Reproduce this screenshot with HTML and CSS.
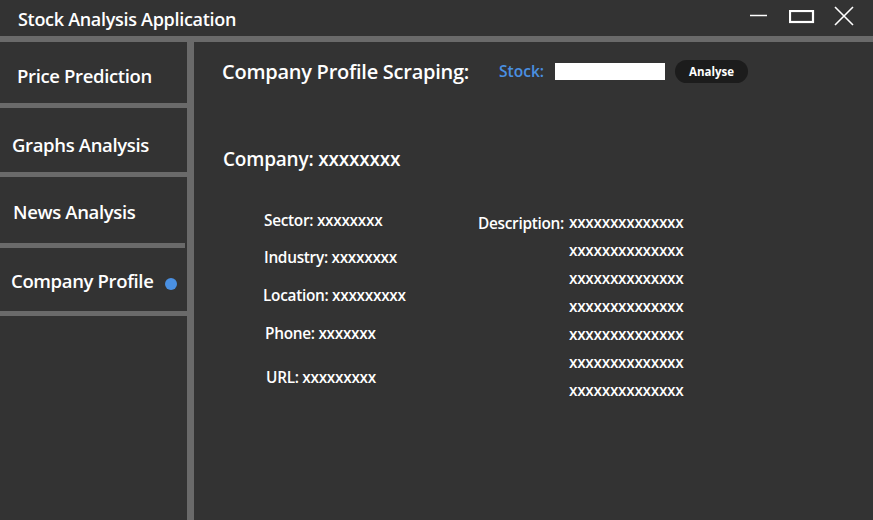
FILE: index.html
```html
<!DOCTYPE html>
<html>
<head>
<meta charset="utf-8">
<link rel="stylesheet" href="styles.css">
</head>
<body>
<div class="app">
  <header class="titlebar">
    <div class="title">Stock Analysis Application</div>
    <div class="controls">
      <svg class="ctl" width="18" height="20" viewBox="0 0 18 20"><line x1="0" y1="15.5" x2="17" y2="15.5" stroke="#fff" stroke-width="1.5"/></svg>
      <svg class="ctl" width="26" height="16" viewBox="0 0 26 16"><rect x="1" y="1" width="23" height="11" fill="none" stroke="#fff" stroke-width="2.2"/></svg>
      <svg class="ctl" width="20" height="20" viewBox="0 0 20 20"><path d="M1 1 L19 19 M19 1 L1 19" stroke="#fff" stroke-width="1.6"/></svg>
    </div>
  </header>
  <div class="main">
    <nav class="sidebar">
      <div class="item item1">Price Prediction</div>
      <div class="item item2">Graphs Analysis</div>
      <div class="item item3">News Analysis</div>
      <div class="item item4">Company Profile <span class="dot"></span></div>
    </nav>
    <section class="content">
      <div class="toolbar">
        <h1 class="heading">Company Profile Scraping:</h1>
        <span class="stock-label">Stock:</span>
        <div class="stock-input"></div>
        <button class="analyse">Analyse</button>
      </div>
      <div class="company">Company: xxxxxxxx</div>
      <div class="details">
        <div class="left">
          <div class="f f1">Sector: xxxxxxxx</div>
          <div class="f f2">Industry: xxxxxxxx</div>
          <div class="f f3">Location: xxxxxxxxx</div>
          <div class="f f4">Phone: xxxxxxx</div>
          <div class="f f5">URL: xxxxxxxxx</div>
        </div>
        <div class="desc">
          <div class="desc-label">Description:</div>
          <div class="desc-lines">
            <div>xxxxxxxxxxxxxx</div>
            <div>xxxxxxxxxxxxxx</div>
            <div>xxxxxxxxxxxxxx</div>
            <div>xxxxxxxxxxxxxx</div>
            <div>xxxxxxxxxxxxxx</div>
            <div>xxxxxxxxxxxxxx</div>
            <div>xxxxxxxxxxxxxx</div>
          </div>
        </div>
      </div>
    </section>
  </div>
</div>
</body>
</html>
```
FILE: styles.css
```css
* { box-sizing: border-box; margin: 0; padding: 0; }
html, body { width: 873px; height: 520px; overflow: hidden; }
body {
  background: #333333;
  color: #ffffff;
  font-family: "Open Sans", "Noto Sans", sans-serif;
}
.app { display: flex; flex-direction: column; height: 520px; }
.titlebar {
  display: flex;
  align-items: center;
  justify-content: space-between;
  padding-left: 18px;
  border-bottom: 6px solid #6a6a6a;
  height: 42px;
}
.title { font-size: 18px; font-weight: 600; letter-spacing: -0.3px; padding-top: 2px; }
.controls { display: flex; align-items: flex-start; align-self: stretch; }
.ctl { display: block; }
.controls .ctl:nth-child(1) { margin-top: 0; margin-right: 21px; }
.controls .ctl:nth-child(2) { margin-top: 10px; margin-right: 19px; }
.controls .ctl:nth-child(3) { margin-top: 6px; margin-right: 19px; }

.main { flex: 1; display: flex; }
.sidebar {
  width: 194px;
  border-right: 7px solid #6a6a6a;
  display: flex;
  flex-direction: column;
}
.item {
  border-bottom: 5px solid #6a6a6a;
  display: flex;
  align-items: center;
  font-size: 18.5px;
  font-weight: 600;
  letter-spacing: -0.35px;
}
.item1 { height: 66px; padding-left: 17px; padding-top: 5px; }
.item2 { height: 69px; padding-left: 12px; padding-top: 9px; }
.item3 { height: 71px; padding-left: 13px; padding-top: 3px; margin-right: 2px; }
.item4 { height: 68px; padding-left: 11px; padding-top: 1px; }
.dot {
  width: 12px; height: 12px; border-radius: 50%;
  background: #4a90e2;
  margin-left: 12px; margin-top: 7px;
}

.content { flex: 1; padding-left: 28px; }
.toolbar { display: flex; align-items: center; height: 60px; padding-bottom: 2px; }
.heading { font-size: 20px; font-weight: 600; letter-spacing: -0.25px; padding-top: 1px; }
.stock-label { color: #4a90e2; font-size: 15.5px; font-weight: 600; margin-left: 30px; }
.stock-input { width: 110px; height: 17px; background: #ffffff; margin-left: 11px; }
.analyse {
  margin-left: 10px;
  width: 73px; height: 23px;
  border: none; border-radius: 12px;
  background: #1c1c1c; color: #ffffff;
  font-family: inherit; font-size: 11.5px; font-weight: 700;
}
.company { margin-top: 44px; font-size: 19px; font-weight: 600; letter-spacing: -0.2px; padding-left: 1px; }
.details { display: flex; margin-top: 38px; padding-left: 42px; }
.left { width: 214px; font-size: 15.4px; font-weight: 600; letter-spacing: -0.3px; }
.f { height: 20px; display: flex; align-items: center; }
.f2 { margin-top: 17px; }
.f3 { margin-top: 18px; margin-left: -1px; }
.f4 { margin-top: 18px; margin-left: 1px; }
.f5 { margin-top: 24px; margin-left: 2px; }
.desc { display: flex; font-size: 15.4px; font-weight: 600; letter-spacing: -0.3px; margin-top: 3px; }
.desc-label { width: 91px; height: 20px; display: flex; align-items: center; }
.desc-lines div { height: 28px; line-height: 20px; }
```
